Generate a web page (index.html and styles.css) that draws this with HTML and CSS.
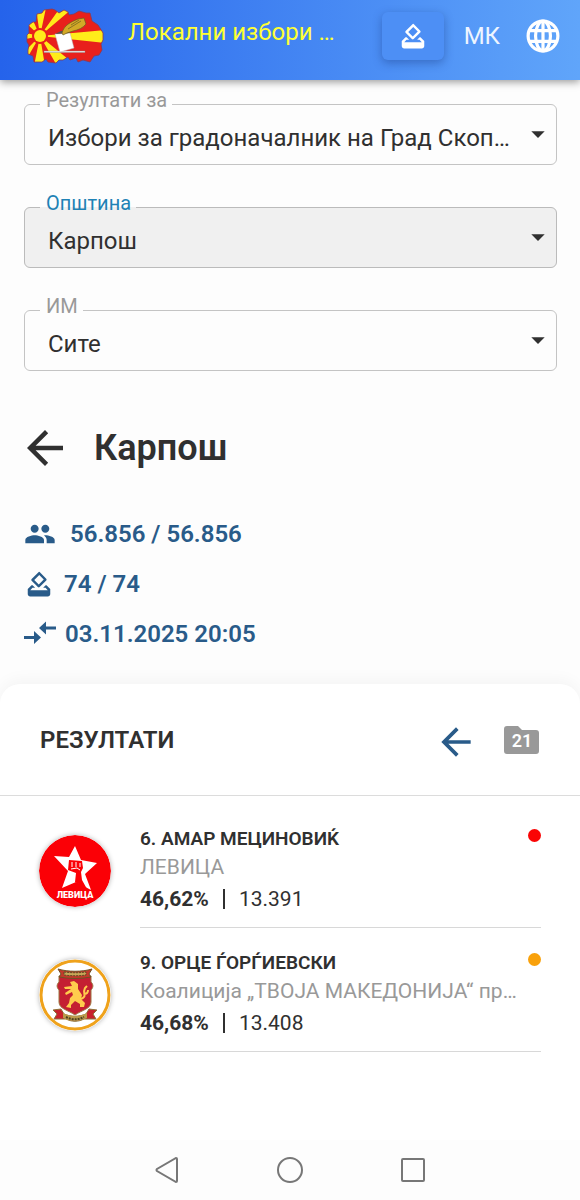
FILE: index.html
```html
<!DOCTYPE html>
<html lang="mk">
<head>
    <meta charset="UTF-8" />
    <meta name="viewport" content="width=device-width, initial-scale=1.0" />
    <title>Локални избори 2025</title>
    <link rel="stylesheet" href="styles.css">
</head>
<body>
    <!-- shared icons -->
    <svg class="sprite" width="0" height="0" aria-hidden="true">
        <symbol id="icon-vote" viewBox="0 0 24 24">
            <path d="M18 13h-.7l-2 2h1.9l1.8 2H5l1.800-2h2.100l-2-2H6l-3 3v4c0 1.100.9 2 2 2h14c1.100 0 2-.9 2-2v-4zM17.800 7.700l-4.900-5a1 1 0 0 0-1.500 0L6.100 8a1 1 0 0 0 0 1.400l5 5a1 1 0 0 0 1.400 0l5.300-5.300a1 1 0 0 0 0-1.400M11.800 12.400 8.200 8.800l4-4 3.600 3.600z" />
        </symbol>
        <symbol id="icon-back" viewBox="0 0 24 24">
            <path d="M20 11H7.830l5.590-5.590L12 4l-8 8 8 8 1.410-1.410L7.830 13H20z" />
        </symbol>
        <symbol id="icon-arrow" viewBox="0 0 24 24">
            <path d="M7 10l5 5 5-5z" />
        </symbol>
    </svg>

    <header class="topbar">
        <svg class="logo" viewBox="0 0 78 56" aria-hidden="true">
            <clipPath id="country">
                <path d="M2 42 3 37 1 34 1 27 3 25 3 17 7 14 10 14 11 6 16 5 18 2 26 1 29 2 33 5 38 2 42 4 43 7 48 6 53 3 60 5 64 5 66 13 72 17 74 20 77 25 77 32 75 36 76 42 73 47 68 48 64 54 57 52 52 54 50 50 44 52 42 49 37 52 33 52 30 55 22 54 20 51 16 54 8 54 7 48 2 46z" />
            </clipPath>
            <g clip-path="url(#country)">
                <rect width="78" height="56" fill="#e8201c" />
                <g fill="#ffec1a">
                    <path d="M14 28 10 0h10zM14 28 34 0h13zM14 28 80 22v13zM14 28 48 56H30zM14 28 19 58H8zM14 28 0 52V42zM14 28 0 31v-6zM14 28 0 15l5-7z" />
                </g>
                <circle cx="14" cy="28" r="8" fill="#e8201c" />
                <circle cx="14" cy="28" r="6" fill="#ffec1a" />
            </g>
            <path d="M2 42 3 37 1 34 1 27 3 25 3 17 7 14 10 14 11 6 16 5 18 2 26 1 29 2 33 5 38 2 42 4 43 7 48 6 53 3 60 5 64 5 66 13 72 17 74 20 77 25 77 32 75 36 76 42 73 47 68 48 64 54 57 52 52 54 50 50 44 52 42 49 37 52 33 52 30 55 22 54 20 51 16 54 8 54 7 48 2 46z" fill="none" stroke="#8a3b52" stroke-width=".8" />
            <path d="M18 43h41v1.500H18z" fill="#eee" stroke="#888" stroke-width=".4" />
            <path d="M29 26l15-1 4 15-14 4z" fill="#fff" stroke="#bbb" stroke-width=".5" />
            <path d="M29 26l6-3 7 0 2 2z" fill="#555" />
            <path d="M36 25c2-8 9-11 16-14l6-1 2 6c-3 4-8 6-13 7l-6 2-4 2z" fill="#d2a927" stroke="#695b20" stroke-width=".7" />
            <path d="M42 21l13-8M45 17l8-5" stroke="#695b20" stroke-width=".7" />
        </svg>
        <span class="site-title">Локални избори 2025</span>
        <button class="vote-btn" type="button" aria-label="Гласање">
            <svg class="icon"><use href="#icon-vote" /></svg>
        </button>
        <button class="lang-btn" type="button">
            <span>МК</span>
            <svg class="globe" viewBox="0 0 32 32" aria-hidden="true">
                <circle cx="16" cy="16" r="14" />
                <ellipse cx="16" cy="16" rx="7" ry="14" />
                <path d="M16 2v28M3 11h26M3 21h26" />
            </svg>
        </button>
    </header>

    <main>
        <form class="filters">
            <fieldset class="field">
                <legend><label for="resultsFor">Резултати за</label></legend>
                <select id="resultsFor">
                    <option>Избори за градоначалник на Град Скопје</option>
                </select>
                <svg class="caret" aria-hidden="true"><use href="#icon-arrow" /></svg>
            </fieldset>
            <fieldset class="field active">
                <legend><label for="municipality">Општина</label></legend>
                <select id="municipality">
                    <option>Карпош</option>
                </select>
                <svg class="caret" aria-hidden="true"><use href="#icon-arrow" /></svg>
            </fieldset>
            <fieldset class="field">
                <legend><label for="station">ИМ</label></legend>
                <select id="station">
                    <option>Сите</option>
                </select>
                <svg class="caret" aria-hidden="true"><use href="#icon-arrow" /></svg>
            </fieldset>
        </form>

        <div class="place">
            <button class="icon-btn" type="button" aria-label="Назад">
                <svg class="back"><use href="#icon-back" /></svg>
            </button>
            <h1>Карпош</h1>
        </div>

        <ul class="stats">
            <li class="voters">
                <svg viewBox="0 0 24 24" aria-hidden="true">
                    <path d="M16 11c1.660 0 2.990-1.340 2.990-3S17.660 5 16 5s-3 1.340-3 3 1.340 3 3 3zm-8 0c1.660 0 2.990-1.340 2.990-3S9.660 5 8 5 5 6.340 5 8s1.340 3 3 3zm0 2c-2.330 0-7 1.170-7 3.500V19h14v-2.500c0-2.330-4.670-3.500-7-3.500zm8 0c-.29 0-.62.02-.97.05 1.160.84 1.970 1.970 1.970 3.450V19h6v-2.500c0-2.330-4.670-3.500-7-3.500z" />
                </svg>
                <span>56.856 / 56.856</span>
            </li>
            <li>
                <svg aria-hidden="true"><use href="#icon-vote" /></svg>
                <span>74 / 74</span>
            </li>
            <li class="updated">
                <svg viewBox="0 0 32 32" aria-hidden="true">
                    <path d="M0 18h10v-5l7 6.500-7 6.500v-5H0zM32 8.500H22v-5L15 10l7 6.500v-5h10z" />
                </svg>
                <span>03.11.2025 20:05</span>
            </li>
        </ul>

        <section class="results">
            <div class="results-head">
                <h2>РЕЗУЛТАТИ</h2>
                <button class="icon-btn" type="button" aria-label="Назад">
                    <svg class="back blue"><use href="#icon-back" /></svg>
                </button>
                <button class="folder" type="button">
                    <svg viewBox="0 0 36 28" aria-hidden="true">
                        <path d="M3 0h11l4 4h14a3 3 0 0 1 3 3v18a3 3 0 0 1-3 3H3a3 3 0 0 1-3-3V3a3 3 0 0 1 3-3z" />
                    </svg>
                    <span>21</span>
                </button>
            </div>

            <div class="candidate">
                <svg class="party-logo" viewBox="0 0 72 72" aria-hidden="true">
                    <circle cx="36" cy="36" r="36" fill="#fb0006" />
                    <path d="M36 11l6 14 16 3-12 11 6 16-15-8-14 6 6-17-14-15 15 1z" fill="#fff" />
                    <path d="M30 25l13 1 1 7-2 4 1 8 5 9-12-7 1-9-8-3z" fill="#fb0006" />
                    <path d="M33 27v5M37 27v5M41 28v4M32 34l6-1 3 2" fill="none" stroke="#fff" stroke-width="1" />
                    <text x="36" y="63" text-anchor="middle">ЛЕВИЦА</text>
                </svg>
                <div class="candidate-info">
                    <div class="candidate-text">
                        <h3>6. АМАР МЕЦИНОВИЌ</h3>
                        <p class="party">ЛЕВИЦА</p>
                        <p class="votes"><strong>46,62%</strong><span class="count">13.391</span></p>
                    </div>
                    <span class="dot red"></span>
                </div>
            </div>

            <div class="candidate">
                <svg class="party-logo" viewBox="0 0 72 72" aria-hidden="true">
                    <circle cx="36" cy="36" r="34" fill="#fff" stroke="#efa21b" stroke-width="3" />
                    <path d="M20 17h32v6c3 3 2 6 0 8v12c0 7-9 8-16 13-7-5-16-6-16-13V31c-2-2-3-5 0-8z" fill="#c41f32" stroke="#9c7742" stroke-width="1" />
                    <path d="M19 10c10 3 24 3 34 0l-3 5 2 3c-10 2-22 2-32 0l2-3z" fill="#c23a2b" stroke="#6b5426" stroke-width="1" />
                    <path d="M25 13c8 1 15 1 22 0v3c-7 1-14 1-22 0z" fill="#c5a758" stroke="#5f4d24" stroke-dasharray="2 1" stroke-width="1" />
                    <path d="M14 51l8-1 3 5c7 3 15 3 22 0l3-5 8 1-4 4 3 5H45c-6 3-12 3-18 0H15l3-5z" fill="#c8202b" stroke="#8c7238" stroke-width="1" />
                    <path d="M24 54c8 4 16 4 24 0v5c-8 4-16 4-24 0z" fill="#b99a4c" />
                    <path d="M27 58c6 3 12 3 18 0" fill="none" stroke="#4c421f" stroke-width="2" stroke-dasharray="2 1" />
                    <path d="M31 23l4-1 4 3v5l4 6-1 4 4 4-1 4h-4v-3l-5-3-4 4v3l-5-1 3-4 1-5 3-3-1-3-6 3-1-2 6-4h-6l-1-2 8-1z" fill="#ffcc4d" />
                    <path d="M42 40c7-3 1-5 4-11l2-2M45 35c3 0 4-2 4-4" fill="none" stroke="#ffcc4d" stroke-width="2" />
                </svg>
                <div class="candidate-info">
                    <div class="candidate-text">
                        <h3>9. ОРЦЕ ЃОРЃИЕВСКИ</h3>
                        <p class="party">Коалиција „ТВОЈА МАКЕДОНИЈА“ предводена од ВМРО-ДПМНЕ</p>
                        <p class="votes"><strong>46,68%</strong><span class="count">13.408</span></p>
                    </div>
                    <span class="dot orange"></span>
                </div>
            </div>
        </section>
    </main>

    <nav class="system-nav">
        <button class="icon-btn" type="button" aria-label="Назад">
            <svg viewBox="0 0 28 28"><path d="M24 3v22q0 1-1 1L4 15q-1-1 0-2L23 2q1 0 1 1z" /></svg>
        </button>
        <button class="icon-btn" type="button" aria-label="Почетна">
            <svg viewBox="0 0 28 28"><circle cx="14" cy="14" r="12" /></svg>
        </button>
        <button class="icon-btn" type="button" aria-label="Апликации">
            <svg viewBox="0 0 28 28"><rect x="3" y="3" width="22" height="22" rx="1" /></svg>
        </button>
    </nav>
</body>
</html>
```
FILE: styles.css
```css
* {
    box-sizing: border-box;
}
body {
    margin: 0;
    min-height: 100vh;
    display: flex;
    flex-direction: column;
    background: #fdfdfd;
    color: #303030;
    font-family: Roboto, "Noto Sans", sans-serif;
    font-size: 20px;
}
main {
    flex: 1;
    display: flex;
    flex-direction: column;
}
h1, h2, h3, p, ul {
    margin: 0;
    padding: 0;
}
button, select {
    font-family: inherit;
    color: inherit;
    border: 0;
    padding: 0;
    background: none;
    cursor: pointer;
}
svg {
    display: block;
    flex-shrink: 0;
}
.sprite {
    position: absolute;
}
.icon-btn {
    display: flex;
}

/* Top bar */
.topbar {
    height: 80px;
    padding: 0 20px 8px 26px;
    display: flex;
    align-items: center;
    background: linear-gradient(90deg, #2563eb, #60a5fa);
    box-shadow: 0 2px 8px rgba(0, 0, 0, 0.4);
    color: #fff;
}
.logo {
    width: 78px;
    height: 56px;
    margin-right: 24px;
}
.site-title {
    flex: 1;
    max-width: 216px;
    padding-bottom: 8px;
    font-size: 24px;
    line-height: 32px;
    color: #ffff33;
    white-space: nowrap;
    overflow: hidden;
    text-overflow: ellipsis;
}
.vote-btn {
    width: 62px;
    height: 48px;
    margin-left: auto;
    display: flex;
    align-items: center;
    justify-content: center;
    border-radius: 6px;
    background: #4d8ff5;
    box-shadow: 0 3px 10px rgba(20, 50, 120, 0.4);
}
.vote-btn .icon {
    width: 30px;
    height: 30px;
    fill: #fff;
}
.lang-btn {
    margin-left: 20px;
    display: flex;
    align-items: center;
    gap: 26px;
    font-size: 24px;
    color: #eef5ff;
}
.globe {
    width: 34px;
    height: 34px;
    fill: none;
    stroke: #fff;
    stroke-width: 3;
}

/* Filters */
.filters {
    padding: 10px 23px 0 24px;
    display: flex;
    flex-direction: column;
    gap: 28px;
}
.field {
    min-width: 0;
    margin: 0;
    padding: 0;
    height: 75px;
    border: 1px solid #c4c4c4;
    border-radius: 6px;
    display: grid;
}
.field legend {
    margin-left: 15px;
    padding: 0 5px 8px 6px;
    line-height: 20px;
    color: #999;
}
.field select {
    grid-area: 1 / 1;
    width: 100%;
    height: 44px;
    padding: 0 46px 4px 23px;
    appearance: none;
    font-size: 24px;
    white-space: nowrap;
    overflow: hidden;
    text-overflow: ellipsis;
}
.caret {
    grid-area: 1 / 1;
    justify-self: end;
    width: 36px;
    height: 32px;
    fill: #303030;
    pointer-events: none;
}
.caret use {
    width: 36px;
    height: 32px;
}
.field.active {
    background: #f0f0f0;
    border-color: #bbb;
}
.field.active legend {
    color: #1f82b5;
}

/* Municipality */
.place {
    padding: 50px 24px 0 18px;
    display: flex;
    align-items: center;
    gap: 22px;
}
h1 {
    font-size: 36px;
    line-height: 48px;
    font-weight: 600;
}
.back {
    width: 54px;
    height: 54px;
    fill: #303030;
}
.back.blue {
    width: 44px;
    height: 44px;
    fill: #295b89;
}
.stats {
    list-style: none;
    padding: 34px 24px 25px;
    display: flex;
    flex-direction: column;
    color: #295b89;
    font-size: 24px;
    font-weight: 600;
}
.stats li {
    height: 50px;
    display: flex;
    align-items: center;
    gap: 10px;
}
.stats svg {
    width: 30px;
    height: 30px;
    fill: #295b89;
}
.stats .voters {
    gap: 14px;
}
.stats .voters svg {
    width: 32px;
    height: 32px;
}
.stats .updated {
    gap: 9px;
}
.stats .updated svg {
    width: 32px;
    height: 32px;
}

/* Results */
.results {
    flex: 1;
    background: #fff;
    border-radius: 20px 20px 0 0;
    box-shadow: 0 -4px 16px rgba(0, 0, 0, 0.04);
}
.results-head {
    height: 112px;
    padding: 0 40px;
    display: flex;
    align-items: center;
    border-bottom: 1px solid #dcdcdc;
    margin-bottom: 29px;
}
.results-head .icon-btn {
    padding-top: 4px;
}
h2 {
    flex: 1;
    font-size: 24px;
    font-weight: 600;
}
.folder {
    width: 36px;
    height: 28px;
    margin-left: 26px;
    display: grid;
    place-items: center;
    color: #fff;
    font-size: 18px;
    font-weight: 600;
}
.folder svg,
.folder span {
    grid-area: 1 / 1;
}
.folder svg {
    width: 36px;
    height: 28px;
    fill: #999;
}
.folder span {
    padding-top: 2px;
}
.candidate {
    padding: 0 39px;
    display: flex;
    gap: 29px;
    margin-bottom: 21px;
}
.party-logo {
    width: 72px;
    height: 72px;
    margin-top: 10px;
    border-radius: 50%;
    box-shadow: 0 0 5px rgba(0, 0, 0, 0.3);
}
.party-logo text {
    font-size: 9px;
    font-weight: 900;
    fill: #fff;
}
.candidate-info {
    flex: 1;
    min-width: 0;
    height: 103px;
    display: flex;
    border-bottom: 1px solid #d8d8d8;
}
.candidate-text {
    flex: 1;
    min-width: 0;
}
h3 {
    font-size: 19px;
    line-height: 28px;
    font-weight: 600;
}
.party {
    max-width: 382px;
    color: #999;
    font-size: 21px;
    line-height: 28px;
    white-space: nowrap;
    overflow: hidden;
    text-overflow: ellipsis;
}
.votes {
    display: flex;
    align-items: center;
    height: 36px;
    font-size: 21px;
}
.count {
    margin-left: 14px;
    padding-left: 14px;
    border-left: 2px solid #303030;
    line-height: 20px;
}
.dot {
    width: 13px;
    height: 13px;
    margin-top: 4px;
    border-radius: 50%;
}
.dot.red {
    background: #fa0505;
}
.dot.orange {
    background: #f9a10b;
}

/* Bottom navigation */
.system-nav {
    height: 60px;
    display: flex;
    align-items: center;
    justify-content: center;
    gap: 95px;
    background: #fdfdfd;
}
.system-nav svg {
    width: 28px;
    height: 28px;
    fill: none;
    stroke: #777;
    stroke-width: 2;
}
```
